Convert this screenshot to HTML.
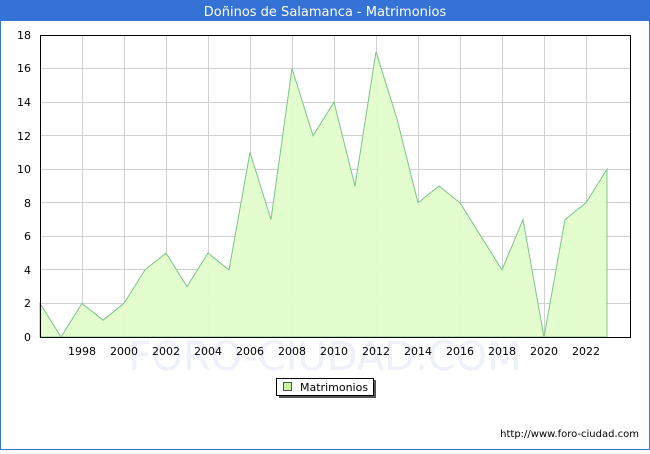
<!DOCTYPE html><html><head><style>body{margin:0;width:650px;height:450px;overflow:hidden;background:#fff;font-family:"DejaVu Sans","Liberation Sans",sans-serif}</style></head><body>
<svg width="650" height="450" xmlns="http://www.w3.org/2000/svg" font-family="DejaVu Sans, Liberation Sans, sans-serif">
<rect x="0.5" y="0.5" width="649" height="449" fill="#fff" stroke="#3572d6"/>
<rect x="0" y="0" width="650" height="21" fill="#3572d6"/>
<text x="325" y="16" fill="#fff" font-size="13" text-anchor="middle">Doñinos de Salamanca - Matrimonios</text>
<text x="325" y="370" fill="#eef0fa" font-size="40" text-anchor="middle">FORO-CIUDAD.COM</text>
<g stroke="#d0d0d0" stroke-width="1">
<path d="M40 303.5H630M40 269.5H630M40 236.5H630M40 202.5H630M40 169.5H630M40 135.5H630M40 102.5H630M40 68.5H630"/>
<path d="M82.5 35V337M124.5 35V337M166.5 35V337M208.5 35V337M250.5 35V337M292.5 35V337M334.5 35V337M376.5 35V337M418.5 35V337M460.5 35V337M502.5 35V337M544.5 35V337M586.5 35V337"/>
</g>
<path d="M40 303.4L61 337L82 303.4L103 320.2L124 303.4L145 269.9L166 253.1L187 286.7L208 253.1L229 269.9L250 152.4L271 219.6L292 68.5L313 135.7L334 102.1L355 186L376 51.7L397 118.9L418 202.8L439 186L460 202.8L481 236.3L502 269.9L523 219.6L544 337L565 219.6L586 202.8L607 169.2L607 337L40 337Z" fill="#e2fdcc" fill-opacity="0.95" stroke="#7cc48a" stroke-width="1"/>
<rect x="40.5" y="35.5" width="590" height="302" fill="none" stroke="#000"/>
<g font-size="11" fill="#000" text-anchor="end">
<text x="31" y="341">0</text><text x="31" y="307">2</text><text x="31" y="274">4</text><text x="31" y="240">6</text><text x="31" y="207">8</text><text x="31" y="173">10</text><text x="31" y="140">12</text><text x="31" y="106">14</text><text x="31" y="72">16</text><text x="31" y="39">18</text>
</g>
<g font-size="11" fill="#000" text-anchor="middle">
<text x="82" y="355">1998</text><text x="124" y="355">2000</text><text x="166" y="355">2002</text><text x="208" y="355">2004</text><text x="250" y="355">2006</text><text x="292" y="355">2008</text><text x="334" y="355">2010</text><text x="376" y="355">2012</text><text x="418" y="355">2014</text><text x="460" y="355">2016</text><text x="502" y="355">2018</text><text x="544" y="355">2020</text><text x="586" y="355">2022</text>
</g>
<rect x="279" y="380" width="97" height="18" fill="#555"/>
<rect x="276.5" y="378.5" width="97" height="17" fill="#fff" stroke="#000"/>
<rect x="283.5" y="382.5" width="8" height="8" fill="#c8f5a0" stroke="#555"/>
<text x="300" y="391" font-size="11">Matrimonios</text>
<text x="639" y="437" font-size="10" text-anchor="end">http://www.foro-ciudad.com</text>
</svg>
</body></html>
